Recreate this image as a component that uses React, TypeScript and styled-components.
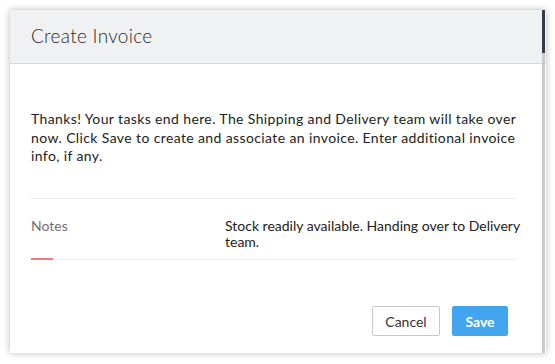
import styled, { createGlobalStyle } from "styled-components";

const GlobalStyle = createGlobalStyle`
  html, body {
    margin: 0;
    padding: 0;
    background: #ffffff;
  }
  body {
    width: 555px;
    height: 364px;
    overflow: hidden;
    font-family: Lato, "Open Sans", "Liberation Sans", sans-serif;
    color: #333333;
  }
`;

const Page = styled.div`
  padding: 10px 9px 0 10px;
`;

const Dialog = styled.div`
  position: relative;
  width: 536px;
  height: 343px;
  background: #ffffff;
  box-shadow: 0 0 7px rgba(0, 0, 0, 0.28);
  display: flex;
  flex-direction: column;
  overflow: hidden;
`;

const Header = styled.div`
  height: 54px;
  box-sizing: border-box;
  background: #f0f1f3;
  border-bottom: 1px solid #d6d7da;
  display: flex;
  align-items: center;
  padding: 0 0 2px 21px;
`;

const Title = styled.h2`
  margin: 0;
  font-size: 19px;
  font-weight: 300;
  color: #2b2b2b;
  letter-spacing: 0.3px;
`;

const Body = styled.div`
  padding: 46px 24px 0 21px;
  flex: 1;
`;

const Intro = styled.p`
  margin: 0;
  font-size: 14px;
  line-height: 18.7px;
  letter-spacing: 0.38px;
  white-space: nowrap;
  color: #222222;
`;

const FieldRow = styled.div`
  margin: 32px 6px 0 0;
  border-top: 1px solid #ececec;
  border-bottom: 1px solid #ececec;
  display: grid;
  grid-template-columns: 194px 1fr;
  padding: 17px 0 10px;
  position: relative;
`;

const Label = styled.div`
  font-size: 14px;
  line-height: 19px;
  color: #707070;
`;

const Value = styled.div`
  font-size: 14px;
  line-height: 15.5px;
  color: #222222;
  padding-top: 2px;
  margin-right: -6px;
  overflow: hidden;
  white-space: nowrap;
`;

const Accent = styled.span`
  position: absolute;
  left: 0;
  bottom: -1px;
  width: 22px;
  height: 2px;
  background: #f07a7a;
`;

const Footer = styled.div`
  display: flex;
  justify-content: flex-end;
  gap: 12px;
  padding: 0 38px 17px 0;
`;

const Button = styled.button<{ $primary?: boolean }>`
  height: 30px;
  box-sizing: border-box;
  padding: 0;
  width: ${(p) => (p.$primary ? "56px" : "68px")};
  font-family: inherit;
  font-size: 14px;
  font-weight: ${(p) => (p.$primary ? 700 : 400)};
  border-radius: 2px;
  border: 1px solid ${(p) => (p.$primary ? "#42a5f0" : "#c9c9c9")};
  background: ${(p) => (p.$primary ? "#42a5f0" : "#ffffff")};
  color: ${(p) => (p.$primary ? "#ffffff" : "#333333")};
  cursor: pointer;
`;

const ScrollTrack = styled.div`
  position: absolute;
  top: 0;
  right: 1px;
  bottom: 0;
  width: 3px;
  background: #c9cacc;
`;

const ScrollThumb = styled.div`
  height: 43px;
  background: #343b4a;
`;

export default function App() {
  return (
    <>
      <GlobalStyle />
      <Page>
        <Dialog>
          <Header>
            <Title>Create Invoice</Title>
          </Header>
          <Body>
            <Intro>
              Thanks! Your tasks end here. The Shipping and Delivery team will take over
              <br />
              now. Click Save to create and associate an invoice. Enter additional invoice
              <br />
              info, if any.
            </Intro>
            <FieldRow>
              <Label>Notes</Label>
              <Value>
                Stock readily available. Handing over to Delivery
                <br />
                team.
              </Value>
              <Accent />
            </FieldRow>
          </Body>
          <Footer>
            <Button>Cancel</Button>
            <Button $primary>Save</Button>
          </Footer>
          <ScrollTrack>
            <ScrollThumb />
          </ScrollTrack>
        </Dialog>
      </Page>
    </>
  );
}
